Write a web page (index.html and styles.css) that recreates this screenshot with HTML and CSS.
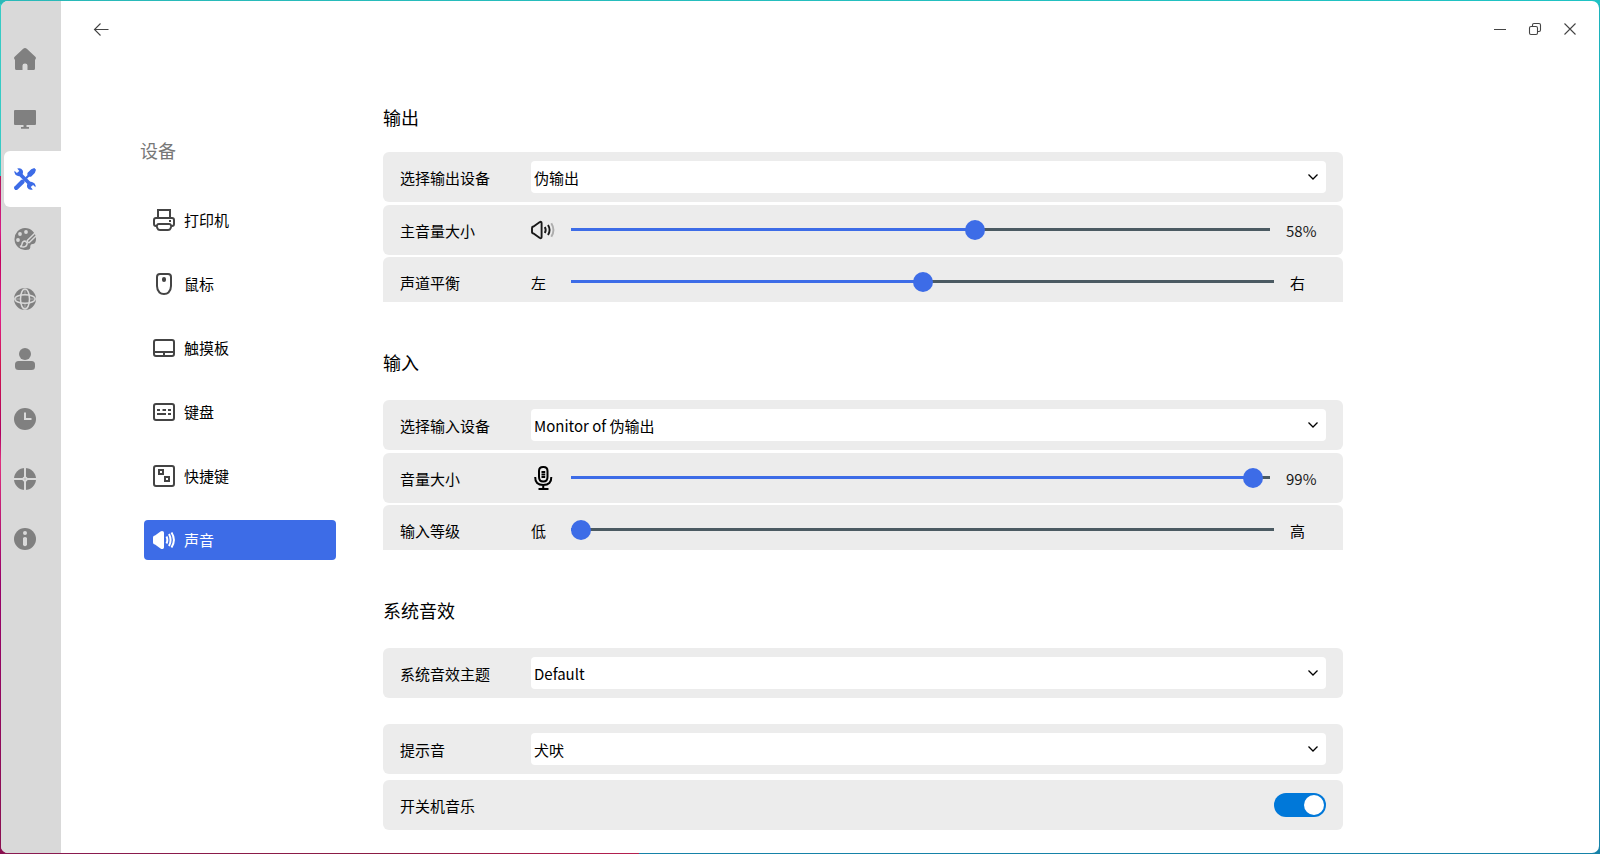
FILE: index.html
```html
<!DOCTYPE html>
<html lang="zh-CN">
<head>
<meta charset="utf-8">
<title>设备 - 声音</title>
<link rel="stylesheet" href="styles.css">
</head>
<body>
<div class="desktop">
<div class="window">
  <aside class="rail">
    <a class="rail-item"><svg viewBox="0 0 22 22"><path d="M11 0 Q12 0 12.800 0.800 L21.600 9 Q22.200 10 21.600 11.200 L21 11.800 V20.500 Q21 22 19.500 22 H13.500 V17.500 Q13.500 15.500 11 15.500 Q8.500 15.500 8.500 17.500 V22 H2.500 Q1 22 1 20.500 V11.800 L0.400 11.200 Q-0.200 10 0.400 9 L9.200 0.800 Q10 0 11 0Z"/></svg></a>
    <a class="rail-item"><svg viewBox="0 0 22 22"><rect y="2" width="22" height="15" rx="1"/><path d="M9.500 17h3v2H15v1.700H7V19h2.500z"/></svg></a>
    <a class="rail-item active"><svg viewBox="0 0 22 22"><path d="M5.300 5.500 L16.500 16.500" fill="none" stroke="currentColor" stroke-width="3.800"/><path d="M3.200 0.500 Q7 -0.600 8.600 2.200 Q9.600 4.600 8.200 6.800 Q6.500 8.600 4 8.100 Q1 7.600 0.400 4.600 L0.500 2.700 L2.900 4.900 L5.300 2.900Z"/><path d="M18.800 21.500 Q15 22.600 13.400 19.800 Q12.400 17.400 13.800 15.200 Q15.500 13.400 18 13.900 Q21 14.400 21.600 17.400 L21.500 19.300 L19.100 17.100 L16.700 19.100Z"/><path d="M20.300 0 L22 1.800 L20.800 5 L17 8.800 H15 L12.800 11 L11.200 9.400 L13.400 7.200 V5 L17.200 1.200Z"/><path d="M2.400 19.700 L8.300 13.900" fill="none" stroke="currentColor" stroke-width="4.400" stroke-linecap="round"/><path d="M0 18 L1 22 L3 22Z"/></svg></a>
    <a class="rail-item"><svg viewBox="0 0 22 22"><path d="M11 0a11 11 0 1 0 1 22C16 22 16.500 20.500 16.300 18 Q16.500 16 18.500 16 Q22 16 22 11 A11 11 0 0 0 11 0Z"/><g class="cut"><circle cx="12" cy="4" r="1.900"/><circle cx="6" cy="6" r="1.900"/><circle cx="4" cy="12" r="1.900"/></g><path class="line" d="M22 4 L12.800 13 M22 8 L14.800 15 M12.800 13 L14.800 15"/><path class="line" d="M6 18.500 Q8 18 8 16 Q8.500 13 11 13 L13.200 15 Q13 18.800 9.500 18.900Z"/></svg></a>
    <a class="rail-item"><svg viewBox="0 0 22 22"><circle cx="11" cy="11" r="11"/><ellipse class="line" cx="11" cy="11" rx="4.500" ry="10"/><ellipse class="line" cx="11" cy="11" rx="10.200" ry="4.200"/><path class="line" d="M11 1v5M11 16v5M1 11h5M16 11h5" opacity=".35"/></svg></a>
    <a class="rail-item"><svg viewBox="0 0 22 22"><circle cx="11" cy="6" r="6"/><rect x="1" y="13" width="20" height="9" rx="3.500"/></svg></a>
    <a class="rail-item"><svg viewBox="0 0 22 22"><circle cx="11" cy="11" r="11"/><path class="line thick" d="M11 4.500V11H17.500"/></svg></a>
    <a class="rail-item"><svg viewBox="0 0 22 22"><circle cx="11" cy="11" r="11"/><path class="line thick" d="M11 0V22M0 11H22"/><circle class="cut" cx="11" cy="11" r="2.600"/><circle cx="11" cy="11" r="1" opacity=".3"/></svg></a>
    <a class="rail-item"><svg viewBox="0 0 22 22"><circle cx="11" cy="11" r="11"/><g class="cut"><circle cx="11" cy="5" r="2"/><path d="M9 10Q11 8 13 10V16.500Q12.800 18.300 11 18.300Q9.200 18.300 9 16.500Z"/></g></svg></a>
  </aside>

  <div class="body">
    <header class="topbar">
      <svg class="back" viewBox="0 0 16 14"><path d="M15.500 7.500H1.500M7.500 1.500L1.500 7.500l6 6"/></svg>
      <div class="controls">
        <svg viewBox="0 0 14 14"><path d="M1 7.500H13"/></svg>
        <svg viewBox="0 0 14 14"><rect x="1.500" y="4.500" width="8" height="8" rx="1.500"/><path d="M4.500 4.500V3Q4.500 1.500 6 1.500H11Q12.500 1.500 12.500 3V8Q12.500 9.500 11 9.500H9.500"/></svg>
        <svg viewBox="0 0 14 14"><path d="M1.500 1.500L12.500 12.500M12.500 1.500L1.500 12.500"/></svg>
      </div>
    </header>

    <div class="columns">
      <nav class="nav">
        <h1 class="nav-title">设备</h1>
        <a class="nav-item"><svg viewBox="0 0 22 22"><path d="M5 9V1H17V9M4 17H3Q1 17 1 15V11Q1 9 3 9H19Q21 9 21 11V15Q21 17 19 17H18M6 15H16Q18.500 15 18 18L17.500 19.500Q17 21 15 21H7Q5 21 4.500 19.500L4 18Q3.500 15 6 15Z"/><path d="M16 12h2"/></svg>打印机</a>
        <a class="nav-item"><svg viewBox="0 0 22 22"><path d="M7 1H15Q18 1 18 4V13Q18 17 15.500 19.500Q14 21 11 21Q8 21 6.500 19.500Q4 17 4 13V4Q4 1 7 1Z"/><rect class="solid" x="9" y="4" width="4" height="5" rx="2"/></svg>鼠标</a>
        <a class="nav-item"><svg viewBox="0 0 22 22"><rect x="1" y="3" width="20" height="16" rx="2"/><path d="M1 15H21M11 15v4"/></svg>触摸板</a>
        <a class="nav-item"><svg viewBox="0 0 22 22"><rect x="1" y="3" width="20" height="16" rx="2"/><path d="M4 9h3M9.500 9h3.500M15 9h3M4 13h9M15 13h3"/></svg>键盘</a>
        <a class="nav-item"><svg viewBox="0 0 22 22"><rect x="1" y="1" width="20" height="20" rx="2"/><rect x="6" y="5" width="4" height="4"/><rect x="12" y="12" width="4" height="4"/></svg>快捷键</a>
        <a class="nav-item active"><svg viewBox="0 0 22 22"><path class="solid" d="M0 8.500Q0 6.500 2 6.500L7.500 2.500Q9 1.500 10.500 2.500Q11 3 11 4V18Q11 19 10.500 19.500Q9 20.500 7.500 19.500L2 15.500Q0 15.500 0 13.500Z"/><path d="M13.500 7.500Q15.200 11 13.500 14.500M16 5Q19.200 11 16 17M18.500 3.500Q23.300 11 18.500 18.500"/></svg>声音</a>
      </nav>

      <main class="settings">
        <h2>输出</h2>
        <section class="group">
          <div class="card"><div class="row"><span class="label">选择输出设备</span><div class="select">伪输出<svg viewBox="0 0 10 6"><path d="M0.500 0.500L5 5L9.500 0.500"/></svg></div></div></div>
          <div class="card"><div class="row"><span class="label">主音量大小</span><span class="lead"><svg class="speaker" viewBox="0 0 24 20"><path d="M1 8Q1 6.500 2.500 6.500L8.500 2.200Q10.600 1 10.600 3V17Q10.600 19 8.500 17.800L2.500 13.500Q1 13.500 1 12Z"/><path d="M13.800 7Q15.600 10 13.800 13M17 5Q20.200 10 17 15"/><path opacity=".3" d="M20.300 3.200Q24.600 10 20.300 16.800"/></svg></span><div class="slider"><i class="fill" style="width:404px"></i><i class="thumb"></i></div><span class="tail percent">58%</span></div></div>
          <div class="card cropped"><div class="row"><span class="label">声道平衡</span><span class="lead">左</span><div class="slider"><i class="fill" style="width:352px"></i><i class="thumb"></i></div><span class="tail">右</span></div></div>
        </section>

        <h2>输入</h2>
        <section class="group input">
          <div class="card"><div class="row"><span class="label">选择输入设备</span><div class="select">Monitor of 伪输出<svg viewBox="0 0 10 6"><path d="M0.500 0.500L5 5L9.500 0.500"/></svg></div></div></div>
          <div class="card"><div class="row"><span class="label">音量大小</span><span class="lead"><svg class="mic" viewBox="0 0 24 24"><path d="M8 5Q8 1 12 1H12.500Q16.500 1 16.500 5V11Q16.500 15.500 12.250 15.500Q8 15.500 8 11ZM4.200 11Q4 19 12.250 19Q20.500 19 20.300 11M12.250 19V23M7.500 23H17.500M10.500 6H14.200M10.500 8.500H14.200M10.500 11H14.200"/></svg></span><div class="slider"><i class="fill" style="width:682px"></i><i class="thumb"></i></div><span class="tail percent">99%</span></div></div>
          <div class="card cropped"><div class="row"><span class="label">输入等级</span><span class="lead">低</span><div class="slider"><i class="fill" style="width:10px"></i><i class="thumb"></i></div><span class="tail">高</span></div></div>
        </section>

        <h2>系统音效</h2>
        <section class="group effects">
          <div class="card"><div class="row"><span class="label">系统音效主题</span><div class="select">Default<svg viewBox="0 0 10 6"><path d="M0.500 0.500L5 5L9.500 0.500"/></svg></div></div></div>
          <div class="card alert"><div class="row"><span class="label">提示音</span><div class="select">犬吠<svg viewBox="0 0 10 6"><path d="M0.500 0.500L5 5L9.500 0.500"/></svg></div></div></div>
          <div class="card"><div class="row"><span class="label">开关机音乐</span><span class="toggle"><i></i></span></div></div>
        </section>
      </main>
    </div>
  </div>
</div>
</div>
</body>
</html>
```
FILE: styles.css
```css
* { box-sizing: border-box; }
body {
  margin: 0;
  font: 15px/22px "Noto Sans CJK SC", sans-serif;
  color: #000;
}
svg { display: block; flex: none; }

.desktop {
  width: 1600px;
  height: 854px;
  padding: 1px;
  overflow: hidden;
  background:
    linear-gradient(90deg, #2ab9b8, #1fc3c4) top / 100% 4px no-repeat,
    linear-gradient(#36cbc5, #36cbc5) left top / 4px 176px no-repeat,
    linear-gradient(#b3195c, #d81c86 8%, #c2005c 12%, #e01f8c 20%, #d0144f 28%, #b00060 38%, #e0307f 42%, #980068 60%, #8a1050) left 176px / 4px 678px no-repeat,
    linear-gradient(90deg, #8a1a52, #8b1d44 60%, #b52050) left bottom / 639px 4px no-repeat,
    linear-gradient(#1cb5bd, #1682a8) #1682a8;
}
.window {
  display: flex;
  height: 852px;
  border-radius: 7px;
  overflow: hidden;
  background: #fff;
}

.rail {
  display: flex;
  flex-direction: column;
  gap: 4px;
  flex: none;
  width: 60px;
  padding: 30px 0 0 3px;
  background: #d9d9d9;
  color: #808080;
}
.rail-item {
  display: flex;
  align-items: center;
  height: 56px;
  padding-left: 10px;
  border-radius: 6px 0 0 6px;
}
.rail-item.active { background: #fff; color: #3d6ce7; }
.rail-item svg { width: 22px; height: 22px; fill: currentColor; }
.rail-item .cut { fill: #d9d9d9; }
.rail-item .line { fill: none; stroke: #d9d9d9; stroke-width: 1.5; }
.rail-item .thick { stroke-width: 2; }

.body { flex: 1; }
.topbar {
  display: flex;
  justify-content: space-between;
  align-items: center;
  height: 54px;
  padding: 1px 22px 0 32px;
}
.topbar svg { fill: none; stroke: #444; stroke-width: 1.1; }
.back { width: 16px; height: 14px; }
.controls { display: flex; gap: 21px; }
.controls svg { width: 14px; height: 14px; }

.columns { display: flex; }
.nav {
  display: flex;
  flex-direction: column;
  gap: 24px;
  width: 192px;
  margin-left: 83px;
  padding-top: 80px;
}
.nav-title {
  margin: 0 0 11px -4px;
  font-size: 18px;
  font-weight: 400;
  line-height: 30px;
  color: #777;
}
.nav-item {
  display: flex;
  align-items: center;
  gap: 9px;
  height: 40px;
  padding-left: 9px;
  border-radius: 4px;
  color: #000;
}
.nav-item svg { width: 22px; height: 22px; fill: none; stroke: #444; stroke-width: 2; }
.nav-item .solid { fill: #444; stroke: none; }
.nav-item.active { background: #3d6ce7; color: #fff; }
.nav-item.active svg { stroke: #fff; }
.nav-item.active .solid { fill: #fff; }

.settings { width: 960px; margin-left: 47px; padding-top: 48px; }
.settings h2 {
  margin: 0;
  font-size: 18px;
  font-weight: 400;
  line-height: 28px;
}
.group { display: flex; flex-direction: column; margin: 21px 0 46px; }
.group.input { margin: 24px 0 46px; }
.group.effects { margin: 24px 0 0; }
.card { height: 50px; border-radius: 6px; background: #ececec; overflow: hidden; }
.card + .card { margin-top: 3px; }
.card + .card.cropped { height: 45px; margin-top: 2px; border-radius: 6px 6px 0 0; }
.effects .card + .card { margin-top: 6px; }
.effects .card + .alert { margin-top: 26px; }
.row { display: flex; align-items: center; height: 50px; padding: 0 17px; }
.label { width: 131px; padding-top: 2px; }
.select {
  display: flex;
  justify-content: space-between;
  align-items: center;
  flex: 1;
  height: 32px;
  padding: 2px 8px 0 3px;
  border-radius: 4px;
  background: #fff;
}
.select svg { width: 10px; height: 6px; margin-top: -3px; fill: none; stroke: #000; stroke-width: 1.3; }
.lead { width: 40px; padding-top: 2px; }
.lead svg { margin-top: -2px; fill: none; stroke: #1a1a1a; stroke-width: 1.9; }
.speaker { width: 24px; height: 20px; }
.lead .mic { width: 24px; height: 24px; stroke: #000; stroke-width: 2; }
.slider {
  display: flex;
  align-items: center;
  flex: 1;
  height: 3px;
  margin-top: -1px;
  background: #4b5a62;
}
.fill { height: 3px; background: #3d6ce7; }
.thumb { flex: none; width: 20px; height: 20px; margin: 1px 0 0 -10px; border-radius: 50%; background: #3d6ce7; }
.tail { width: 52px; padding: 2px 0 0 16px; }
.percent { width: 56px; color: #1a1a1a; }
.toggle {
  display: flex;
  justify-content: flex-end;
  width: 52px;
  height: 24px;
  margin-left: auto;
  padding: 2px;
  border-radius: 12px;
  background: #0078d9;
}
.toggle i { width: 20px; height: 20px; border-radius: 50%; background: #fff; }
```
